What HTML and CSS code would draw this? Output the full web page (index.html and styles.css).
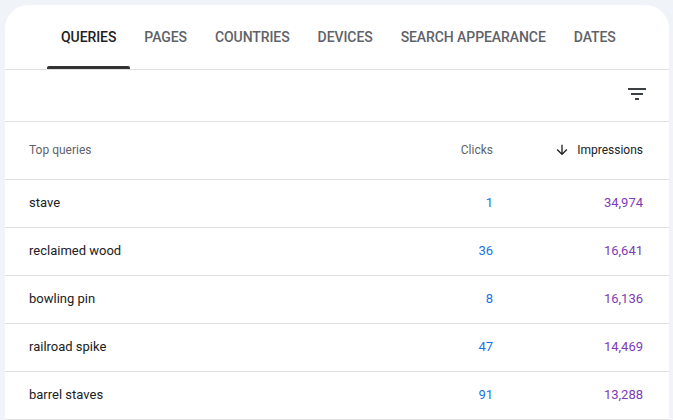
FILE: index.html
```html
<!DOCTYPE html>
<html>
<head>
<meta charset="utf-8">
<link rel="stylesheet" href="styles.css">
</head>
<body>
<div class="card">
  <nav class="tabs">
    <div class="tab active">QUERIES</div>
    <div class="tab">PAGES</div>
    <div class="tab">COUNTRIES</div>
    <div class="tab">DEVICES</div>
    <div class="tab">SEARCH APPEARANCE</div>
    <div class="tab">DATES</div>
  </nav>
  <div class="toolbar">
    <svg class="filter" width="24" height="24" viewBox="0 0 24 24"><path d="M10 18h4v-2h-4v2zM3 6v2h18V6H3zm3 7h12v-2H6v2z" fill="#3c4043"/></svg>
  </div>
  <div class="row head">
    <div class="c-q">Top queries</div>
    <div class="c-n">Clicks</div>
    <div class="c-n sorted"><svg width="16" height="16" viewBox="0 0 24 24"><path d="M20 12l-1.41-1.41L13 16.17V4h-2v12.17l-5.58-5.59L4 12l8 8 8-8z" fill="#202124"/></svg>Impressions</div>
  </div>
  <div class="row"><div class="c-q">stave</div><div class="c-n clk">1</div><div class="c-n imp">34,974</div></div>
  <div class="row"><div class="c-q">reclaimed wood</div><div class="c-n clk">36</div><div class="c-n imp">16,641</div></div>
  <div class="row"><div class="c-q">bowling pin</div><div class="c-n clk">8</div><div class="c-n imp">16,136</div></div>
  <div class="row"><div class="c-q">railroad spike</div><div class="c-n clk">47</div><div class="c-n imp">14,469</div></div>
  <div class="row"><div class="c-q">barrel staves</div><div class="c-n clk">91</div><div class="c-n imp">13,288</div></div>
</div>
</body>
</html>
```
FILE: styles.css
```css
html, body {
  margin: 0;
  padding: 0;
  background: #f0f4f9;
  height: 420px;
  overflow: hidden;
}
body {
  padding: 5px 4px 0 5px;
  font-family: Roboto, "Liberation Sans", sans-serif;
  color: #202124;
}
.card {
  background: #fff;
  border-radius: 24px 24px 0 0;
  width: 664px;
}
.tabs {
  display: flex;
  padding-left: 42px;
  height: 64px;
  border-bottom: 1px solid #e0e0e0;
}
.tab {
  display: flex;
  align-items: center;
  padding: 0 14px;
  font-size: 14px;
  font-weight: 500;
  letter-spacing: -0.08px;
  color: #5f6368;
  position: relative;
}
.tab.active {
  color: #202124;
}
.tab.active::after {
  content: "";
  position: absolute;
  left: 0;
  right: 0;
  bottom: 0;
  height: 3px;
  background: #333;
  border-radius: 2px 2px 0 0;
}
.toolbar {
  height: 51px;
  display: flex;
  align-items: center;
  justify-content: flex-end;
  padding-right: 20px;
  border-bottom: 1px solid #e0e0e0;
}
.filter {
  margin-top: -4px;
}
.row {
  display: grid;
  grid-template-columns: 1fr 150px 150px;
  align-items: center;
  height: 45px;
  padding: 0 26px 2px 24px;
  border-bottom: 1px solid #e0e0e0;
  font-size: 13px;
  color: #202124;
}
.row.head {
  height: 55px;
  font-size: 12px;
  color: #5f6368;
}
.c-n {
  text-align: right;
}
.sorted {
  color: #202124;
  display: flex;
  justify-content: flex-end;
  align-items: center;
  gap: 7px;
}
.clk { color: #1a73e8; }
.imp { color: #7e3bb6; }
```
